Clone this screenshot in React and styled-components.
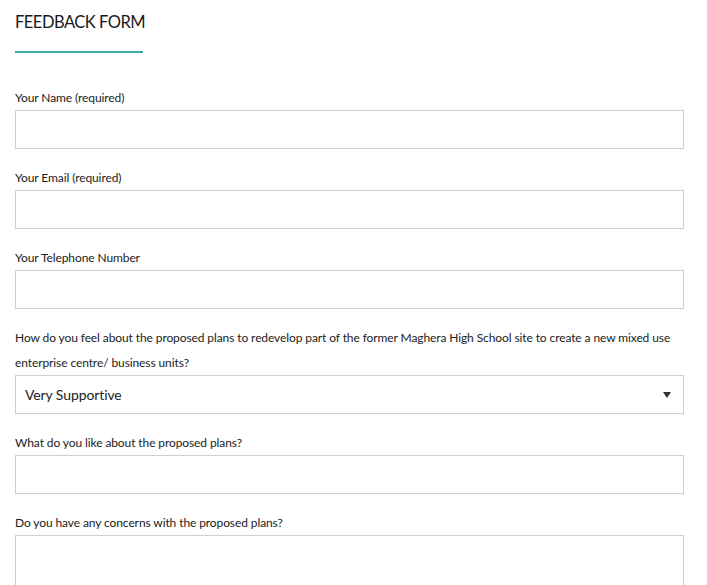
import React from 'react';
import styled, { createGlobalStyle } from 'styled-components';

const GlobalStyle = createGlobalStyle`
  html, body {
    margin: 0;
    padding: 0;
    background: #fff;
  }
  body {
    font-family: Lato, "Open Sans", "Liberation Sans", sans-serif;
    color: #222;
  }
`;

const Page = styled.div`
  padding: 0 15px;
  width: 669px;
`;

const Header = styled.div`
  padding-top: 12px;
  margin-bottom: 32px;
`;

const Title = styled.h2`
  margin: 0;
  font-size: 16.5px;
  font-weight: 400;
  letter-spacing: -0.5px;
  line-height: 20px;
  color: #1a1a1a;
`;

const Rule = styled.div`
  width: 128px;
  border-top: 2px solid #3aaaa6;
  margin-top: 19px;
`;

const Field = styled.div`
  margin-bottom: 16px;
`;

const Label = styled.label`
  display: block;
  font-size: 12px;
  letter-spacing: -0.1px;
  line-height: 25px;
  color: #222;
`;

const TextInput = styled.input`
  display: block;
  box-sizing: border-box;
  width: 100%;
  height: 39px;
  border: 1px solid #cfcfcf;
  background: #fff;
  outline: none;
  margin: 0;
  padding: 0 8px;
  font: inherit;
`;

const TextArea = styled.textarea`
  display: block;
  box-sizing: border-box;
  width: 100%;
  height: ${({ rows }) => rows * 20}px;
  border: 1px solid #cfcfcf;
  outline: none;
  resize: none;
  margin: 0;
  padding: 8px;
  font: inherit;
`;

const SelectBox = styled.div`
  box-sizing: border-box;
  height: 39px;
  border: 1px solid #cfcfcf;
  display: flex;
  align-items: center;
  justify-content: space-between;
  padding: 0 12px 0 9px;
  font-size: 14px;
  letter-spacing: -0.1px;
  color: #222;
`;

const Arrow = styled.span`
  width: 0;
  height: 0;
  border-left: 4px solid transparent;
  border-right: 4px solid transparent;
  border-top: 6px solid #333;
  margin-top: 1px;
`;

const fields = [
  { label: 'Your Name (required)' },
  { label: 'Your Email (required)' },
  { label: 'Your Telephone Number' },
];

const App = () => {
  return (
    <>
      <GlobalStyle />
      <Page>
        <Header>
          <Title>FEEDBACK FORM</Title>
          <Rule />
        </Header>
        {fields.map((f, i) => (
          <Field key={i}>
            <Label>{f.label}</Label>
            <TextInput type="text" />
          </Field>
        ))}
        <Field>
          <Label>
            How do you feel about the proposed plans to redevelop part of the former Maghera High School site to create a new mixed use enterprise centre/ business units?
          </Label>
          <SelectBox>
            <span>Very Supportive</span>
            <Arrow />
          </SelectBox>
        </Field>
        <Field>
          <Label>What do you like about the proposed plans?</Label>
          <TextInput type="text" />
        </Field>
        <Field>
          <Label>Do you have any concerns with the proposed plans?</Label>
          <TextArea rows={6} />
        </Field>
      </Page>
    </>
  );
};

export default App;
